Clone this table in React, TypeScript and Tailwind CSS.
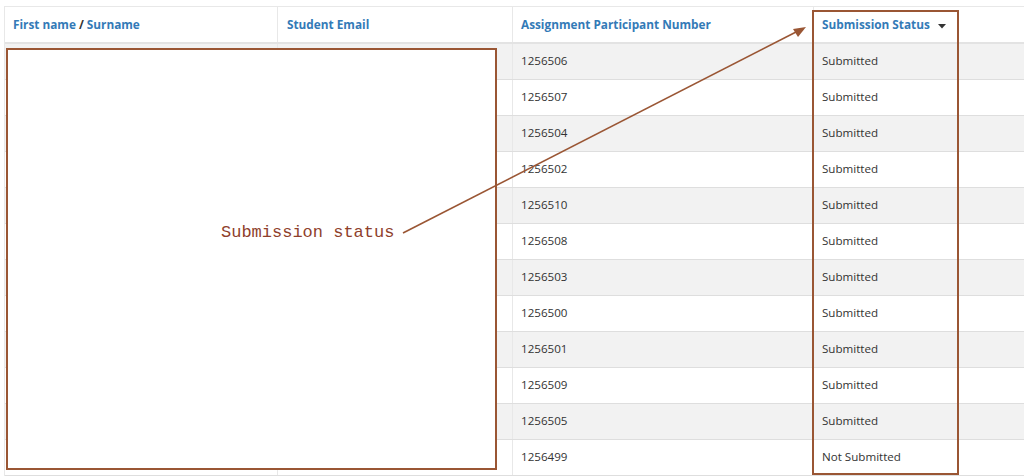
import React from "react";

const rows = [
  ["1256506", "Submitted"],
  ["1256507", "Submitted"],
  ["1256504", "Submitted"],
  ["1256502", "Submitted"],
  ["1256510", "Submitted"],
  ["1256508", "Submitted"],
  ["1256503", "Submitted"],
  ["1256500", "Submitted"],
  ["1256501", "Submitted"],
  ["1256509", "Submitted"],
  ["1256505", "Submitted"],
  ["1256499", "Not Submitted"],
];

const cols = "grid grid-cols-[273px_235px_301px_300px]";

export default function App() {
  return (
    <div className="relative w-[1024px] h-[476px] overflow-hidden bg-white font-['Open_Sans',sans-serif] text-[11.6px]">
      <div className="pt-[6px] pl-[4px]">
        <div className="w-[1109px] border-t border-l border-[#e8e8e8]">
          <div className={`${cols} h-[37px] border-b-2 border-[#e3e3e3] font-bold text-[11.8px] text-[#337ab7]`}>
            <div className="flex items-center pl-[8px] pt-[1px] border-r border-[#e8e8e8]">
              First name <span className="mx-[3px] text-[#333]">/</span> Surname
            </div>
            <div className="flex items-center pl-[9px] pt-[1px] border-r border-[#e8e8e8]">Student Email</div>
            <div className="flex items-center pl-[8px] pt-[1px] border-r border-[#e8e8e8]">Assignment Participant Number</div>
            <div className="flex items-center pl-[8px] pt-[1px]">
              Submission Status
              <svg className="ml-[8px] mt-[2px]" width="8" height="5" viewBox="0 0 8 5">
                <path d="M0 0 L8 0 L4 4.5 Z" fill="#333" />
              </svg>
            </div>
          </div>
          {rows.map(([num, status], i) => (
            <div
              key={num}
              className={`${cols} h-[36px] border-b border-[#dedede] text-[#333] ${i % 2 === 0 ? "bg-[#f2f2f2]" : "bg-white"}`}
            >
              <div className="border-r border-[#e8e8e8]" />
              <div className="border-r border-[#e8e8e8]" />
              <div className="flex items-center pl-[8px] pb-[1px] border-r border-[#e8e8e8]">{num}</div>
              <div className="flex items-center pl-[8px] pb-[1px]">{status}</div>
            </div>
          ))}
        </div>
      </div>

      {/* annotation overlay */}
      <div className="absolute left-[6px] top-[48px] w-[491px] h-[422px] border-2 border-[#9a5634] bg-white" />
      <div className="absolute left-[812px] top-[10px] w-[147px] h-[465px] border-2 border-[#9a5634]" />
      <div className="absolute left-[221px] top-[221px] font-['Liberation_Mono',monospace] text-[17px] leading-[24px] text-[#8f3f2c]">
        Submission status
      </div>
      <svg className="absolute left-0 top-0" width="1024" height="476" viewBox="0 0 1024 476">
        <line x1="403" y1="233" x2="798" y2="31" stroke="#9a5634" strokeWidth="1.6" />
        <path d="M806 27 L793 29 L798 37 Z" fill="#9a5634" />
      </svg>
    </div>
  );
}
